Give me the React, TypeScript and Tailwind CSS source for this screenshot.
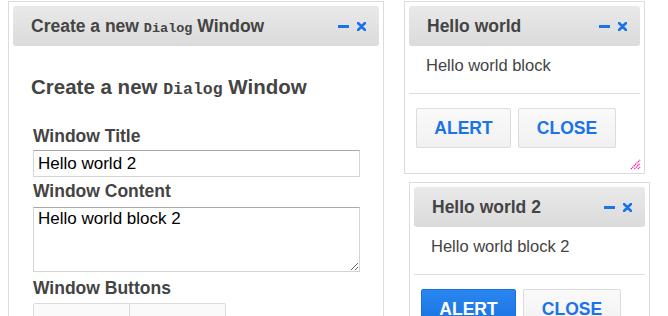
import { ReactNode } from "react";

const sans = { fontFamily: '"Liberation Sans", Arial, sans-serif' };
const mono = { fontFamily: '"Liberation Mono", "Courier New", monospace' };

function WindowIcons() {
  return (
    <div className="flex items-center gap-[8px]">
      {/* minimize */}
      <svg width="11" height="3" viewBox="0 0 11 3">
        <rect width="11" height="3" fill="#1a73e8" />
      </svg>
      {/* close */}
      <svg width="9" height="9" viewBox="0 0 9 9">
        <path d="M1 1 L8 8 M8 1 L1 8" stroke="#1a73e8" strokeWidth="2.6" strokeLinecap="round" />
      </svg>
    </div>
  );
}

function WindowHeader({ children }: { children: ReactNode }) {
  return (
    <div className="flex h-[40px] shrink-0 items-center justify-between rounded-[3px] bg-gradient-to-b from-[#e9e9e9] to-[#dbdbdb] pl-[18px] pr-[13px]">
      <span className="text-[17.5px] font-bold text-[#444]">{children}</span>
      <WindowIcons />
    </div>
  );
}

function Btn({ label, active }: { label: string; active?: boolean }) {
  return (
    <button
      className={
        active
          ? "h-[40px] w-full rounded-[2px] border border-[#1670dd] bg-gradient-to-b from-[#2a86f0] to-[#1570e0] text-[17.5px] font-bold text-white"
          : "h-[40px] w-full rounded-[2px] border border-[#dcdcdc] bg-gradient-to-b from-[#fafafa] to-[#f1f1f1] text-[17.5px] font-bold text-[#1a73e8]"
      }
    >
      {label}
    </button>
  );
}

function HelloWindow({ title, body, alertActive, grip }: { title: string; body: string; alertActive?: boolean; grip?: boolean }) {
  return (
    <div className="relative flex w-[241px] flex-col border border-[#dcdcdc] bg-white p-[4px]">
      <WindowHeader>{title}</WindowHeader>
      <div className="h-[48px] border-b border-[#dedede] pt-[9px] pl-[17px] text-[16.5px] leading-[20px] text-[#444]">{body}</div>
      <div className="flex gap-[7px] pt-[14px] pb-[21px] pl-[7px]">
        <div className="w-[95px]">
          <Btn label="ALERT" active={alertActive} />
        </div>
        <div className="w-[98px]">
          <Btn label="CLOSE" />
        </div>
      </div>
      {/* resize grip */}
      {grip && (
        <svg className="absolute right-[3px] bottom-[3px]" width="11" height="11" viewBox="0 0 11 11">
          <path d="M1 10 L10 1 M4.5 10 L10 4.5 M8 10 L10 8" stroke="#ff10a0" strokeWidth="1.3" strokeDasharray="1.2 0.8" />
        </svg>
      )}
    </div>
  );
}

export default function App() {
  return (
    <div className="relative h-[316px] w-[668px] overflow-hidden bg-white" style={sans}>
      {/* create dialog window */}
      <div className="absolute top-[1px] left-[8px] flex w-[376px] flex-col border border-[#dcdcdc] bg-white p-[4px]">
        <WindowHeader>
          Create a new <span className="text-[13.5px]" style={mono}>Dialog</span> Window
        </WindowHeader>
        <div className="flex flex-col px-[20px] pb-[20px]">
          <h2 className="mt-[29px] -ml-[2px] text-[20.5px] leading-[24px] font-bold text-[#444]">
            Create a new <span className="text-[16.5px]" style={mono}>Dialog</span> Window
          </h2>
          <label className="mt-[24px] text-[17.5px] leading-[20px] font-bold text-[#444]">Window Title</label>
          <input
            readOnly
            value="Hello world 2"
            className="mt-[4px] h-[27px] w-[327px] border border-[#d4d4d4] border-t-[#a9a9a9] px-[4px] text-[17px] text-black outline-none"
          />
          <label className="mt-[4px] text-[17.5px] leading-[20px] font-bold text-[#444]">Window Content</label>
          <textarea
            readOnly
            value="Hello world block 2"
            className="mt-[6px] h-[65px] w-[327px] resize-y border border-[#d4d4d4] border-t-[#a9a9a9] px-[4px] pt-[1px] text-[17px] leading-[20px] text-black outline-none"
          />
          <label className="mt-[6px] text-[17.5px] leading-[20px] font-bold text-[#444]">Window Buttons</label>
          <div className="mt-[5px] flex w-[193px]">
            <div className="h-[40px] w-[97px] rounded-l-[2px] border border-[#dcdcdc] bg-[#fafafa]" />
            <div className="h-[40px] w-[96px] rounded-r-[2px] border border-l-0 border-[#dcdcdc] bg-[#fafafa]" />
          </div>
        </div>
      </div>

      <div className="absolute top-[1px] left-[404px]">
        <HelloWindow title="Hello world" body="Hello world block" grip />
      </div>
      <div className="absolute top-[182px] left-[409px]">
        <HelloWindow title="Hello world 2" body="Hello world block 2" alertActive />
      </div>
    </div>
  );
}
